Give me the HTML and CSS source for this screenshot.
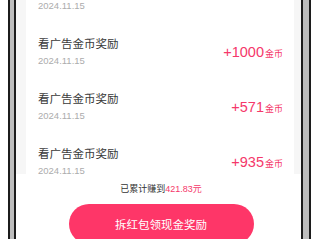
FILE: index.html
```html
<!DOCTYPE html>
<html lang="zh">
<head>
<meta charset="utf-8">
<link rel="stylesheet" href="styles.css">
</head>
<body>
<div class="frame">
  <div class="screen">
    <div class="list">
      <div class="card">
        <div class="row">
          <div class="info"><div class="title">看广告金币奖励</div><div class="date">2024.11.15</div></div>
        </div>
        <div class="row">
          <div class="info"><div class="title">看广告金币奖励</div><div class="date">2024.11.15</div></div>
          <div class="amount">+1000<span class="unit">金币</span></div>
        </div>
        <div class="row">
          <div class="info"><div class="title">看广告金币奖励</div><div class="date">2024.11.15</div></div>
          <div class="amount">+571<span class="unit">金币</span></div>
        </div>
        <div class="row">
          <div class="info"><div class="title">看广告金币奖励</div><div class="date">2024.11.15</div></div>
          <div class="amount">+935<span class="unit">金币</span></div>
        </div>
      </div>
    </div>
    <div class="footer">
      <div class="summary">已累计赚到<span class="money">421.83元</span></div>
      <div class="btn">拆红包领现金奖励</div>
    </div>
  </div>
</div>
</body>
</html>
```

FILE: styles.css
```css
html, body {
  margin: 0;
  padding: 0;
  background: #fff;
  height: 239px;
  overflow: hidden;
}
body {
  font-family: "Liberation Sans", "Noto Sans CJK SC", sans-serif;
}
.frame {
  margin-left: 8px;
  width: 303px;
  height: 239px;
  box-sizing: border-box;
  border-left: 2px solid #1c1c1c;
  border-right: 2px solid #1c1c1c;
  background: #bdbdbd;
  padding: 0 6px 0 4px;
}
.screen {
  height: 100%;
  box-sizing: border-box;
  border-left: 2px solid #1c1c1c;
  border-right: 2px solid #1c1c1c;
  display: flex;
  flex-direction: column;
  background: #f6f6f6;
}
.list {
  flex: 1;
  overflow: hidden;
  padding: 0 7px 0 10px;
}
.card {
  background: #fff;
  margin-top: -31px;
  padding: 0 11px 0 12px;
}
.row {
  display: flex;
  align-items: center;
  justify-content: space-between;
  padding: 12px 0;
  height: 31px;
}
.title {
  font-size: 11.5px;
  line-height: 16px;
  color: #3a3a3a;
}
.date {
  font-size: 9.5px;
  line-height: 12px;
  margin-top: 3px;
  color: #acacac;
}
.amount {
  color: #f5386a;
  font-size: 14.5px;
  line-height: 16px;
  padding-top: 2px;
}
.unit {
  font-size: 9px;
  margin-left: 1px;
}
.footer {
  height: 65px;
  flex: none;
  background: #fff;
  display: flex;
  flex-direction: column;
  align-items: center;
  padding-left: 5px;
}
.summary {
  margin-top: 9px;
  font-size: 9px;
  line-height: 12px;
  color: #333;
}
.money {
  color: #f5386a;
}
.btn {
  margin-top: 9px;
  width: 185px;
  height: 40px;
  border-radius: 20px;
  background: #fe3668;
  color: #fff;
  font-size: 11.5px;
  line-height: 42px;
  text-align: center;
}
```
